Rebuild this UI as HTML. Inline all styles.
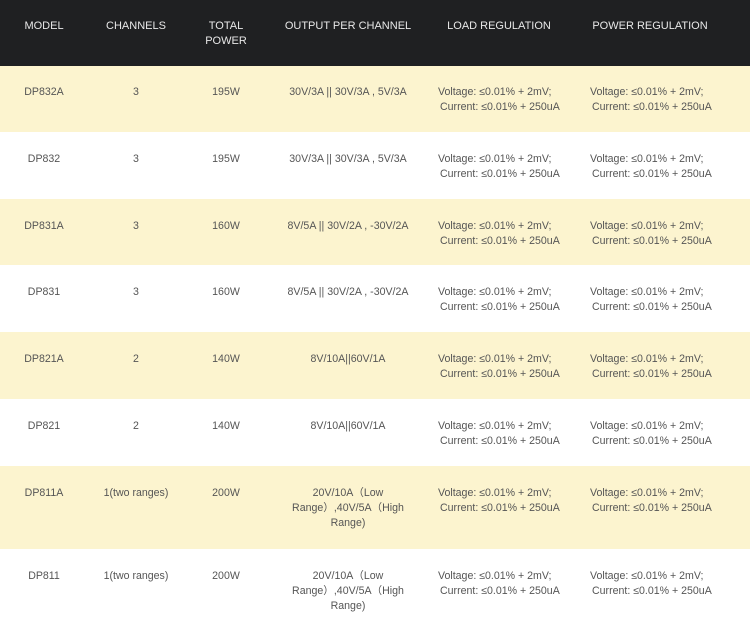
<!DOCTYPE html>
<html><head><style>
body{margin:0;width:750px;height:636px;overflow:hidden;background:#fff;font-family:"Liberation Sans",sans-serif;font-size:10.6px;color:#555;}
.r{position:absolute;left:0;width:750px}
.t{position:absolute;line-height:15px;white-space:nowrap}
.c{text-align:center;transform:translateX(-50%)}
.h{color:#e8e8e8;font-size:11px}
.i{padding-left:2px}
</style></head><body>
<div class="r" style="top:0;height:66px;background:#1f2022"></div>
<div class="r" style="top:66px;height:66px;background:#fcf4cf"></div>
<div class="r" style="top:199px;height:66px;background:#fcf4cf"></div>
<div class="r" style="top:332px;height:67px;background:#fcf4cf"></div>
<div class="r" style="top:466px;height:83px;background:#fcf4cf"></div>
<div id="x"></div>
<script>
var rows=[
["DP832A","3","195W","30V/3A || 30V/3A , 5V/3A",91],
["DP832","3","195W","30V/3A || 30V/3A , 5V/3A",158],
["DP831A","3","160W","8V/5A || 30V/2A , -30V/2A",225],
["DP831","3","160W","8V/5A || 30V/2A , -30V/2A",291],
["DP821A","2","140W","8V/10A||60V/1A",358],
["DP821","2","140W","8V/10A||60V/1A",425],
["DP811A","1(two ranges)","200W","20V/10A（Low<br>Range）,40V/5A（High<br>Range)",492],
["DP811","1(two ranges)","200W","20V/10A（Low<br>Range）,40V/5A（High<br>Range)",575]];
var h='';
function c(x,y,s,cls){h+='<div class="t c '+(cls||'')+'" style="left:'+x+'px;top:'+(y-6)+'px">'+s+'</div>';}
c(44,25,'MODEL','h');c(136,25,'CHANNELS','h');c(226,25,'TOTAL<br>POWER','h');c(348,25,'OUTPUT PER CHANNEL','h');c(499,25,'LOAD REGULATION','h');c(650,25,'POWER REGULATION','h');
rows.forEach(function(r){var y=r[4];c(44,y,r[0]);c(136,y,r[1]);c(226,y,r[2]);c(348,y,r[3]);
var v='Voltage: ≤0.01% + 2mV;<br><span class="i">Current: ≤0.01% + 250uA</span>';
h+='<div class="t" style="left:438px;top:'+(y-6)+'px">'+v+'</div>';
h+='<div class="t" style="left:590px;top:'+(y-6)+'px">'+v+'</div>';});
document.getElementById('x').innerHTML=h;
</script>
</body></html>
